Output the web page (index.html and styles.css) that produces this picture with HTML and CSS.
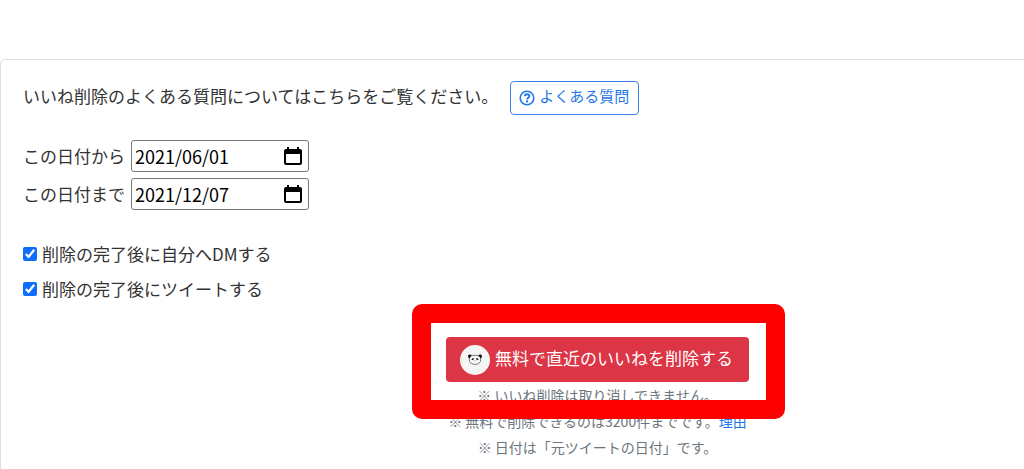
FILE: index.html
```html
<!DOCTYPE html>
<html lang="ja">
<head>
    <meta charset="UTF-8">
    <meta name="viewport" content="width=device-width, initial-scale=1.0">
    <title>いいね削除</title>
    <link rel="stylesheet" href="styles.css">
</head>
<body>

    <div class="card">
        <div class="faq">
            <span>いいね削除のよくある質問についてはこちらをご覧ください。</span>
            <a class="btn-faq" href="#faq">
                <svg width="16" height="16" viewBox="0 0 16 16" fill="none" stroke="currentColor" aria-hidden="true">
                    <circle cx="8" cy="8" r="6.8" stroke-width="1.6"/>
                    <path d="M5.8 6.3C5.900 4.900 6.800 4.200 8 4.200c1.300 0 2.300.8 2.300 2 0 1.500-2.200 1.600-2.200 3.200" stroke-width="1.900"/>
                    <circle cx="8.100" cy="11.500" r="1.150" fill="currentColor" stroke="none"/>
                </svg>
                <span>よくある質問</span>
            </a>
        </div>

        <!-- Date range -->
        <div class="dates">
            <div class="date-row">
                <label for="dateFrom">この日付から</label>
                <div class="date-box">
                    <input type="text" id="dateFrom" value="2021/06/01">
                    <button type="button" class="picker" aria-label="カレンダー">
                        <svg width="18" height="20" viewBox="0 0 18 20" aria-hidden="true">
                            <path fill-rule="evenodd" d="M3 1h2v2h8V1h2v2h1a2 2 0 0 1 2 2v12a2 2 0 0 1-2 2H2a2 2 0 0 1-2-2V5a2 2 0 0 1 2-2h1zM2 8v9h14V8z"/>
                        </svg>
                    </button>
                </div>
            </div>
            <div class="date-row">
                <label for="dateTo">この日付まで</label>
                <div class="date-box">
                    <input type="text" id="dateTo" value="2021/12/07">
                    <button type="button" class="picker" aria-label="カレンダー">
                        <svg width="18" height="20" viewBox="0 0 18 20" aria-hidden="true">
                            <path fill-rule="evenodd" d="M3 1h2v2h8V1h2v2h1a2 2 0 0 1 2 2v12a2 2 0 0 1-2 2H2a2 2 0 0 1-2-2V5a2 2 0 0 1 2-2h1zM2 8v9h14V8z"/>
                        </svg>
                    </button>
                </div>
            </div>
        </div>

        <!-- Options -->
        <div class="options">
            <div class="check-row">
                <input type="checkbox" id="sendDm" checked>
                <label for="sendDm">削除の完了後に自分へDMする</label>
            </div>
            <div class="check-row">
                <input type="checkbox" id="sendTweet" checked>
                <label for="sendTweet">削除の完了後にツイートする</label>
            </div>
        </div>

        <div class="submit">
            <div class="submit-wrap">
                <button type="button" class="btn-delete">
                    <svg width="30" height="30" viewBox="0 0 30 30" aria-hidden="true">
                        <circle cx="15" cy="15" r="15" fill="#f5f5f5"/>
                        <path d="M10.500 11.200C8.800 13.500 8.900 16.300 10.700 17.900c2.200 2 6.400 2 8.600 0 1.800-1.600 1.900-4.400.2-6.700-2.500-1.100-6.500-1.100-9 0z" fill="#fafafa" stroke="#444" stroke-width=".7"/>
                        <path d="M11.800 10.300C10.500 8.800 8.200 9.200 8 11c-.1 1.300.6 2.200 1.600 2.400.4-1.400 1.100-2.300 2.200-3.100zM18.200 10.300c1.300-1.500 3.600-1.100 3.800.7.1 1.300-.6 2.200-1.600 2.400-.4-1.400-1.100-2.300-2.200-3.100z" fill="#111"/>
                        <ellipse cx="12.700" cy="14.100" rx="1.300" ry=".8" fill="#111" transform="rotate(-35 12.700 14.100)"/>
                        <ellipse cx="17.300" cy="14.100" rx="1.300" ry=".8" fill="#111" transform="rotate(35 17.300 14.100)"/>
                        <path d="M14.400 15.400h1.200l-.6.8z" fill="#111"/>
                    </svg>
                    <span>無料で直近のいいねを削除する</span>
                </button>
                <div class="highlight"></div>
            </div>
            <p>※ いいね削除は取り消しできません。</p>
            <p>※ 無料で削除できるのは3200件までです。<a href="#reason">理由</a></p>
            <p>※ 日付は「元ツイートの日付」です。</p>
        </div>
    </div>

</body>
</html>
```

FILE: styles.css
```css
* {
    box-sizing: border-box;
}

body {
    margin: 0;
    padding-top: 59px;
    background-color: #fff;
    color: #333;
    font-family: 'Noto Sans CJK JP', sans-serif;
    font-size: 17px;
    line-height: 26px;
    overflow: hidden;
}

/* wider than the window, runs off the right edge */
.card {
    width: 116.7%;
    padding: 21px 22px;
    border: 1px solid #dfdfdf;
    border-radius: 5px;
}

.faq {
    display: flex;
    align-items: center;
    gap: 12px;
}

.faq span {
    padding-bottom: 4px;
}

.btn-faq {
    display: flex;
    align-items: center;
    gap: 4px;
    height: 34px;
    padding: 0 9px 0 8px;
    border: 1px solid #3b82e6;
    border-radius: 4px;
    color: #1f77e8;
    font-size: 15px;
    text-decoration: none;
}

.dates {
    display: grid;
    gap: 6px;
    margin-top: 25px;
}

.date-row {
    display: flex;
    align-items: center;
    gap: 6px;
}

.date-box {
    display: flex;
    align-items: center;
    width: 178px;
    height: 32px;
    padding: 0 6px 0 3px;
    border: 1px solid #777;
    border-radius: 3px;
}

.date-box input {
    flex: 1;
    min-width: 0;
    padding: 0;
    border: none;
    background: none;
    color: #000;
    font-family: inherit;
    font-size: 18px;
}

.picker {
    display: flex;
    padding: 0;
    border: none;
    background: none;
    cursor: pointer;
}

.options {
    display: grid;
    gap: 9px;
    margin-top: 31px;
}

.check-row {
    display: flex;
    align-items: center;
    gap: 5px;
}

.check-row input {
    width: 14px;
    height: 14px;
    margin: 0;
    accent-color: #0d6efd;
}

.submit {
    display: flex;
    flex-direction: column;
    align-items: center;
    margin-top: 35px;
}

.submit-wrap {
    position: relative;
}

.btn-delete {
    display: flex;
    align-items: center;
    gap: 5px;
    height: 45px;
    padding: 0 16px 0 14px;
    border: none;
    border-radius: 4px;
    background-color: #dc3545;
    color: #fff;
    font-family: inherit;
    font-size: 17px;
    cursor: pointer;
}

.btn-delete span {
    padding-bottom: 4px;
}

.highlight {
    position: absolute;
    inset: -33px -36px -37px -34px;
    border: 19px solid #f00;
    border-radius: 10px;
    pointer-events: none;
}

.submit p {
    margin: 0;
    color: #6c757d;
    font-size: 14px;
}

.submit a {
    color: #1f77e8;
    text-decoration: none;
}
```
